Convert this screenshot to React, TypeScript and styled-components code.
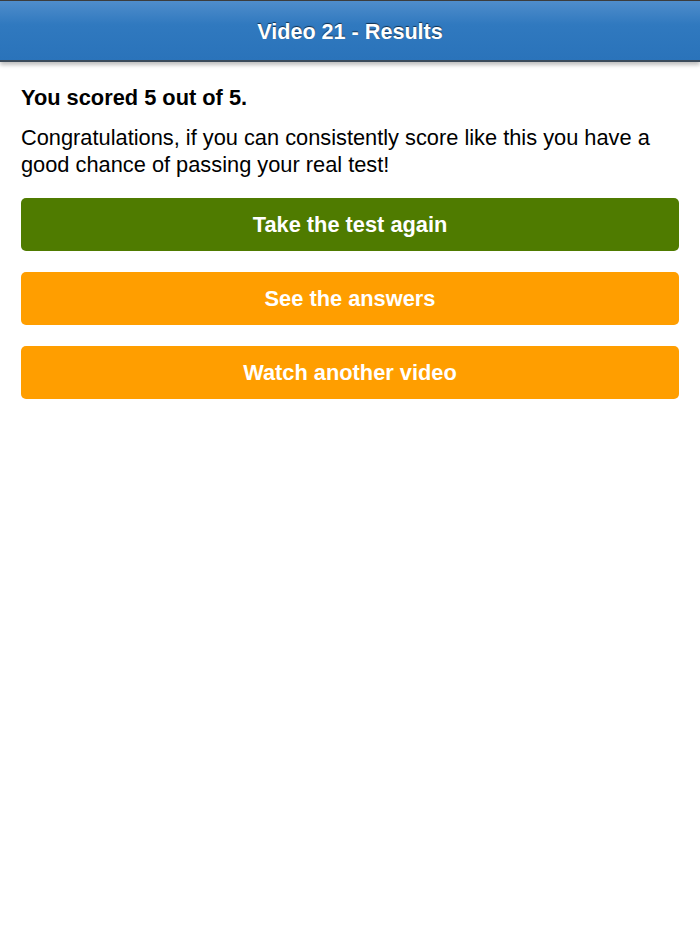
import styled, { createGlobalStyle } from 'styled-components';

const GlobalStyle = createGlobalStyle`
  html, body {
    margin: 0;
    padding: 0;
    background: #ffffff;
  }
  body {
    font-family: "Liberation Sans", Arial, Helvetica, sans-serif;
  }
`;

const Page = styled.div`
  min-height: 100vh;
  background: #ffffff;
`;

const Header = styled.header`
  height: 56px;
  padding-top: 3px;
  box-sizing: content-box;
  border-top: 1px solid #3c3c3c;
  border-bottom: 2px solid #3a4a5a;
  background: linear-gradient(to bottom, #4f8dcb 0%, #3079bf 40%, #2a73ba 100%);
  box-shadow: 0 3px 4px rgba(0, 0, 0, 0.25);
  display: flex;
  align-items: center;
  justify-content: center;
`;

const HeaderTitle = styled.h1`
  margin: 0;
  font-size: 21.6px;
  font-weight: bold;
  color: #ffffff;
  text-shadow: 0 -1px 1px rgba(0, 0, 0, 0.6);
`;

const Content = styled.main`
  padding: 24px 21px;
  display: flex;
  flex-direction: column;
`;

const Score = styled.p`
  margin: 0 0 14px;
  font-size: 21.8px;
  font-weight: bold;
  color: #000000;
  line-height: 24px;
`;

const Message = styled.p`
  margin: 0 0 20px;
  font-size: 21.8px;
  line-height: 27px;
  color: #000000;
`;

const Actions = styled.div`
  display: flex;
  flex-direction: column;
  gap: 21px;
`;

const ActionButton = styled.button<{ $tone: 'green' | 'orange' }>`
  height: 53px;
  width: 100%;
  border: none;
  border-radius: 5px;
  background: ${({ $tone }) => ($tone === 'green' ? '#4f7b00' : '#ff9e00')};
  color: #ffffff;
  font-family: "Liberation Sans", Arial, Helvetica, sans-serif;
  font-size: 21.8px;
  font-weight: bold;
  cursor: pointer;
`;

const App = () => {
  return (
    <Page>
      <GlobalStyle />
      <Header>
        <HeaderTitle>Video 21 - Results</HeaderTitle>
      </Header>
      <Content>
        <Score>You scored 5 out of 5.</Score>
        <Message>
          Congratulations, if you can consistently score like this you have a good chance of
          passing your real test!
        </Message>
        <Actions>
          <ActionButton $tone="green">Take the test again</ActionButton>
          <ActionButton $tone="orange">See the answers</ActionButton>
          <ActionButton $tone="orange">Watch another video</ActionButton>
        </Actions>
      </Content>
    </Page>
  );
};

export default App;
